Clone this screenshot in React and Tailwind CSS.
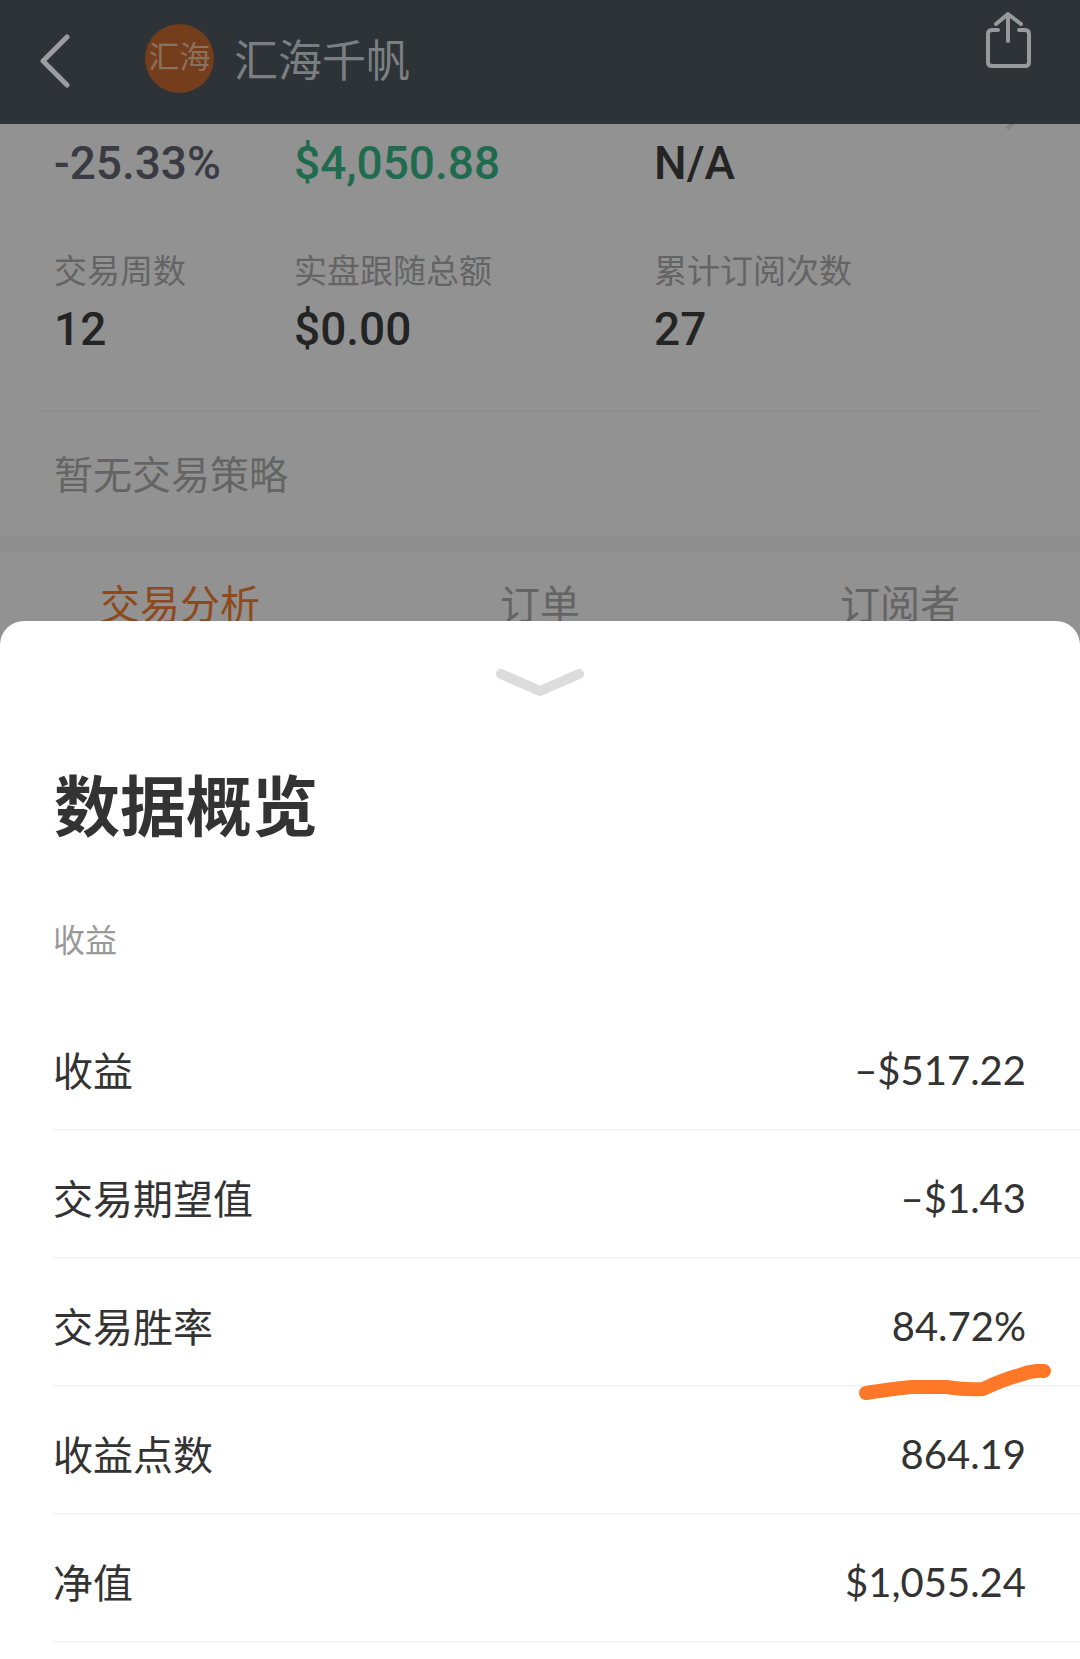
import React from 'react';

const stats = [
  { value: '-25.33%', color: 'text-[#3a3a42]' },
  { value: '$4,050.88', color: 'text-[#1f6b50]' },
  { value: 'N/A', color: 'text-[#242424]' },
];

const totals = [
  { label: '交易周数', value: '12' },
  { label: '实盘跟随总额', value: '$0.00' },
  { label: '累计订阅次数', value: '27' },
];

const tabs = ['交易分析', '订单', '订阅者'];

const rows = [
  { label: '收益', value: '–$517.22' },
  { label: '交易期望值', value: '–$1.43' },
  { label: '交易胜率', value: '84.72%', marked: true },
  { label: '收益点数', value: '864.19' },
  { label: '净值', value: '$1,055.24' },
];

const BackIcon = () => (
  <svg width="32" height="56" viewBox="0 0 32 56" fill="none" stroke="#9c9da0" strokeWidth="5" strokeLinecap="round" strokeLinejoin="round">
    <path d="M27 3 3 27l24 24" />
  </svg>
);

const ShareIcon = () => (
  <svg width="48" height="58" viewBox="0 0 48 58" fill="none" stroke="#97999b" strokeWidth="4" strokeLinecap="round" strokeLinejoin="round">
    <path d="M14 18H8q-4 0-4 4v28q0 4 4 4h33q4 0 4-4V22q0-4-4-4h-6" />
    <path d="M24 29V2M12 12 24 2l13 10" />
  </svg>
);

// Hand-drawn marker line under a value
const MarkerStroke = () => (
  <svg className="absolute -right-[26px] top-full mt-2" width="194" height="38" viewBox="0 0 194 38" fill="none" stroke="#ff7827" strokeWidth="14" strokeLinecap="round" strokeLinejoin="round">
    <path d="M8 29 Q40 24 55 23 H88 Q108 26 125 25 C140 18 154 13 162 11 Q174 6 186 7" />
  </svg>
);

const Header = () => (
  <header className="flex h-[124px] items-center bg-[#2e3337] pl-10 pr-12">
    <button type="button" aria-label="返回">
      <BackIcon />
    </button>
    <div className="mb-2 ml-[73px] flex size-[69px] items-center justify-center rounded-full bg-[#743e1c] text-[31px] text-[#8b715f]">
      汇海
    </div>
    <h1 className="ml-5 text-[44px] text-[#7c7f82]">汇海千帆</h1>
    <button type="button" aria-label="分享" className="ml-auto mt-3 self-start">
      <ShareIcon />
    </button>
  </header>
);

const Overview = () => (
  <section className="relative">
    <svg className="absolute right-16 top-0" width="14" height="8" viewBox="0 0 14 8" stroke="#838383" strokeWidth="4">
      <path d="M11 -1 5 5" />
    </svg>
    <div className="grid grid-cols-[240px_360px_1fr] px-[54px] pt-3 text-[46px] font-medium leading-[54px]">
      {stats.map((s) => (
        <div key={s.value} className={s.color}>{s.value}</div>
      ))}
    </div>
    <dl className="grid grid-cols-[240px_360px_1fr] px-[54px] pt-[58px]">
      {totals.map((t) => (
        <div key={t.label}>
          <dt className="text-[33px] leading-[48px] text-[#646464]">{t.label}</dt>
          <dd className="mt-[6px] text-[46px] font-medium leading-[54px] text-[#242424]">{t.value}</dd>
        </div>
      ))}
    </dl>
    <div className="mx-10 mt-[55px] border-t border-[#8a8a8a]" />
    <p className="px-[54px] pb-[31px] pt-[34px] text-[39px] leading-[60px] text-[#646464]">暂无交易策略</p>
  </section>
);

const Sheet = () => (
  <section className="relative -mt-6 flex-1 rounded-t-3xl bg-white pb-4 text-[#333]">
    <button type="button" aria-label="收起" className="mx-auto block pt-12">
      <svg width="88" height="28" viewBox="0 0 88 28" fill="none" stroke="#dcdcdc" strokeWidth="10" strokeLinecap="round" strokeLinejoin="round">
        <path d="M5 5 44 22 83 5" />
      </svg>
    </button>
    <h2 className="px-[54px] pt-16 text-[66px] font-bold leading-[96px]">数据概览</h2>
    <div className="pl-[53px]">
      <table className="w-full border-collapse">
        <caption className="pb-[37px] pt-[60px] text-left text-[32px] leading-[48px] text-[#999]">收益</caption>
        <tbody>
          {rows.map((row) => (
            <tr key={row.label} className="h-32 border-b-2 border-[#f4f4f4] text-[40px]">
              <th scope="row" className="pt-[14px] text-left font-normal">{row.label}</th>
              <td className="pr-[54px] pt-2 text-right font-[Lato,'Noto_Sans_CJK_SC',sans-serif]">
                <span className="relative inline-block">
                  {row.value}
                  {row.marked && <MarkerStroke />}
                </span>
              </td>
            </tr>
          ))}
        </tbody>
      </table>
    </div>
  </section>
);

export default function App() {
  return (
    <div className="flex min-h-screen flex-col overflow-hidden bg-[#929292] font-[Roboto,'Noto_Sans_CJK_SC',sans-serif]">
      <Header />
      <Overview />
      <div className="h-[14px] bg-[#8e8e8e]" />
      <nav className="grid grid-cols-3 pb-[9px] pt-[25px] text-[40px] leading-[60px]">
        {tabs.map((tab, i) => (
          <button key={tab} type="button" className={i === 0 ? 'text-[#8c4a1c]' : 'text-[#646464]'}>
            {tab}
          </button>
        ))}
      </nav>
      <Sheet />
    </div>
  );
}
